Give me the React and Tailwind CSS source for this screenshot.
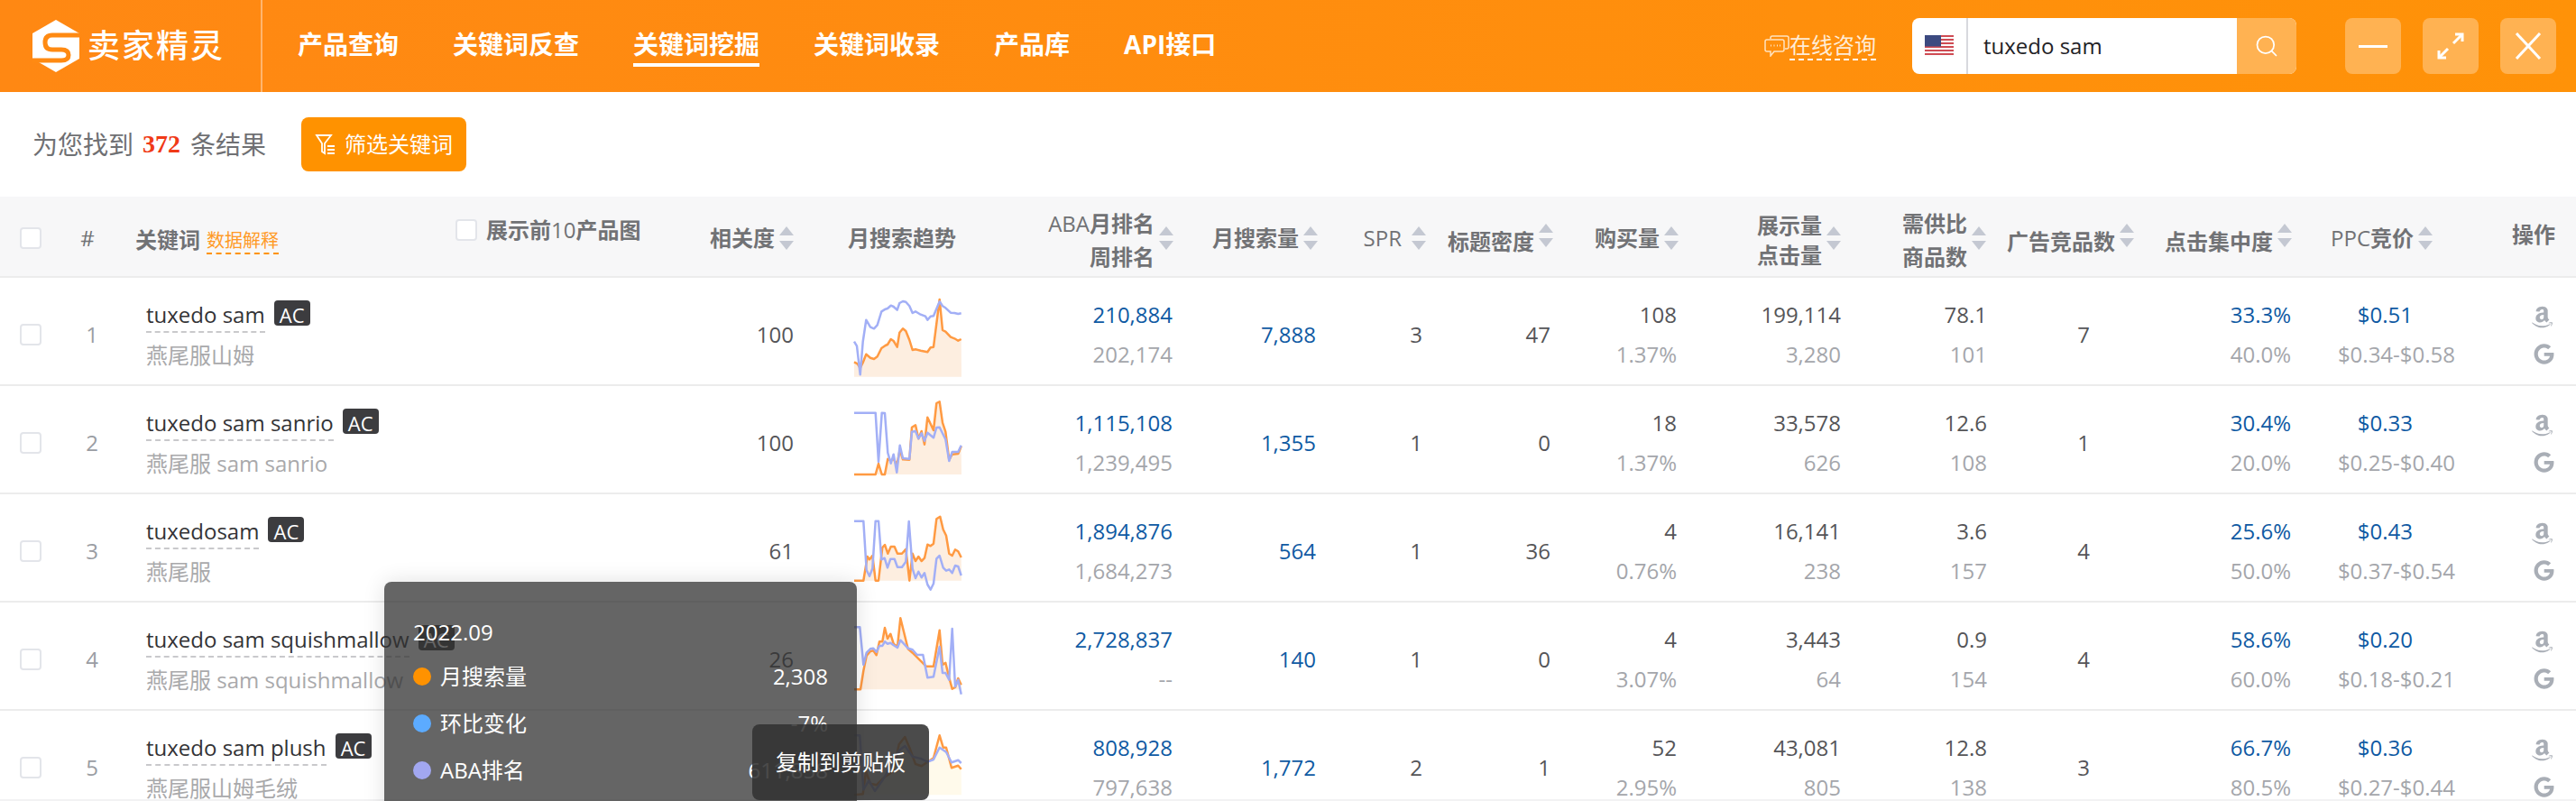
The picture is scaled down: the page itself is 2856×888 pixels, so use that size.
import { Search } from "lucide-react";
import { FaAmazon, FaGoogle } from "react-icons/fa";

const gridCols =
  "grid grid-cols-[70px_64px_626px_120px_220px_202px_160px_120px_140px_140px_180px_162px_163px_175px_188px_126px]";

// sparkline points are [x, y] read off the chart, scaled in toPoints
const rows = [
  {
    no: 1, kw: "tuxedo sam", zh: "燕尾服山姆", rel: "100",
    aba: "210,884", week: "202,174", vol: "7,888", spr: "3", title: "47",
    buy: "108", buyPct: "1.37%", imp: "199,114", click: "3,280", ratio: "78.1", goods: "101",
    ads: "7", top: "33.3%", top2: "40.0%", ppc: "$0.51", range: "$0.34-$0.58",
    off: -8, base: 347, fill: "#fdeee0",
    orange: [141,298,152,304,161,318,170,300,181,272,195,284,207,288,218,280,232,252,245,243,252,240,263,222,272,228,284,248,292,200,303,187,313,195,325,225,335,258,345,256,362,260,385,265,395,250,405,248,425,90,435,192,445,197,462,215,475,220,487,227,497,222],
    blue: [141,230,150,245,161,340,170,230,181,158,195,182,207,187,218,175,232,130,245,122,252,120,263,110,272,114,284,125,292,102,303,96,313,98,325,112,335,135,345,130,362,140,378,146,385,158,395,146,405,145,425,97,435,112,445,118,462,134,475,135,487,138,497,136],
  },
  {
    no: 2, kw: "tuxedo sam sanrio", zh: "燕尾服 sam sanrio", rel: "100",
    aba: "1,115,108", week: "1,239,495", vol: "1,355", spr: "1", title: "0",
    buy: "18", buyPct: "1.37%", imp: "33,578", click: "626", ratio: "12.6", goods: "108",
    ads: "1", top: "30.4%", top2: "20.0%", ppc: "$0.33", range: "$0.25-$0.40",
    off: -128, base: 672, fill: "#fdeee0",
    orange: [141,672,212,672,222,636,233,672,243,672,253,620,262,625,272,620,283,640,293,590,303,622,325,623,333,515,345,508,355,553,365,528,375,572,385,482,405,525,415,435,425,430,435,500,445,530,457,623,467,605,487,603,497,578],
    blue: [141,467,212,467,222,630,233,467,243,468,253,600,263,635,272,605,283,665,293,575,303,618,325,620,333,530,345,528,355,553,365,535,375,560,385,533,405,550,415,516,425,515,445,555,457,627,467,597,487,597,497,575],
  },
  {
    no: 3, kw: "tuxedosam", zh: "燕尾服", rel: "61",
    aba: "1,894,876", week: "1,684,273", vol: "564", spr: "1", title: "36",
    buy: "4", buyPct: "0.76%", imp: "16,141", click: "238", ratio: "3.6", goods: "157",
    ads: "4", top: "25.6%", top2: "50.0%", ppc: "$0.43", range: "$0.37-$0.54",
    off: -8, base: 305, fill: "#fdeee0",
    orange: [141,305,172,305,185,225,192,235,202,222,212,305,222,305,235,195,243,186,253,215,263,192,275,192,285,215,300,215,313,200,325,305,335,215,345,240,355,225,365,240,375,230,385,185,395,190,405,182,415,100,427,92,437,135,447,155,457,215,467,222,477,202,487,208,497,228],
    blue: [141,107,172,107,182,270,192,290,202,265,212,107,222,107,232,235,242,230,252,262,262,233,275,233,285,260,300,260,313,242,323,108,335,265,345,297,355,275,365,295,375,280,385,318,395,335,405,315,415,232,425,222,437,262,447,272,457,268,467,280,477,255,487,258,497,288],
  },
  {
    no: 4, kw: "tuxedo sam squishmallow", zh: "燕尾服 sam squishmallow", rel: "26",
    aba: "2,728,837", week: "--", vol: "140", spr: "1", title: "0",
    buy: "4", buyPct: "3.07%", imp: "3,443", click: "64", ratio: "0.9", goods: "154",
    ads: "4", top: "58.6%", top2: "60.0%", ppc: "$0.20", range: "$0.18-$0.21",
    off: -68, base: 487, fill: "#fdeee0",
    orange: [141,487,162,487,172,425,182,375,195,360,205,358,215,373,225,328,235,328,243,282,252,318,262,302,272,335,285,345,295,250,320,352,335,365,350,380,365,395,380,410,405,410,425,290,435,405,445,398,457,448,467,485,477,480,487,450,497,472],
    blue: [141,280,160,280,172,405,182,365,195,352,205,350,215,362,225,342,235,342,243,328,252,335,262,332,272,340,285,348,295,323,320,350,335,355,350,372,370,372,385,448,405,445,425,345,435,432,445,432,457,455,467,285,477,478,487,455,497,503],
  },
  {
    no: 5, kw: "tuxedo sam plush", zh: "燕尾服山姆毛绒", rel: "",
    aba: "808,928", week: "797,638", vol: "1,772", spr: "2", title: "1",
    buy: "52", buyPct: "2.95%", imp: "43,081", click: "805", ratio: "12.8", goods: "138",
    ads: "3", top: "66.7%", top2: "80.5%", ppc: "$0.36", range: "$0.27-$0.44",
    off: -188, base: 838, fill: "#fffaeb",
    orange: [141,838,170,835,180,760,195,800,215,805,240,780,270,760,290,670,310,645,325,680,345,735,365,742,385,728,405,715,425,640,437,680,447,680,465,748,487,740,497,752],
    blue: [141,640,160,640,172,820,190,790,210,825,235,790,270,730,290,690,310,675,335,710,365,718,385,728,405,720,425,680,447,695,465,730,487,722,497,732],
  },
];

function toPoints(list, off) {
  const out = [];
  for (let i = 0; i < list.length; i += 2) {
    out.push(`${((list[i] - 141) / 3).toFixed(1)},${(list[i + 1] / 3 + off).toFixed(1)}`);
  }
  return out.join(" ");
}

function Sparkline({ row }) {
  const baseY = (row.base / 3 + row.off).toFixed(1);
  const line = toPoints(row.orange, row.off);
  return (
    <svg width="119" height="118" viewBox="0 0 119 118" className="-translate-y-[2px] overflow-visible">
      <polygon points={`0,${baseY} ${line} 119,${baseY}`} fill={row.fill} />
      <polyline points={line} fill="none" stroke="#ff9a42" strokeWidth="2.5" strokeLinejoin="round" />
      <polyline points={toPoints(row.blue, row.off)} fill="none" stroke="#a2aff6" strokeWidth="2.5" strokeLinejoin="round" />
    </svg>
  );
}

function Logo() {
  return (
    <svg width="52" height="58" viewBox="0 0 52 58">
      <polygon points="26,0 52,15 52,43 26,58 0,43 0,15" fill="#ffffff" />
      <path
        d="M52 17 H22 Q14 17 14 25 Q14 33 22 33 H32 Q40 33 40 39 Q40 45 32 45 H0"
        fill="none"
        stroke="#ff8a12"
        strokeWidth="5"
      />
    </svg>
  );
}

function FlagUS() {
  const stripes = [0, 4, 8, 12, 16, 20];
  return (
    <svg width="32" height="24" viewBox="0 0 32 24">
      <rect width="32" height="24" fill="#fbfbfb" />
      {stripes.map((y) => (
        <rect key={y} x="0" y={y} width="32" height="2" fill="#cf4b53" />
      ))}
      <rect width="18" height="12.5" fill="#3c4a80" />
    </svg>
  );
}

function ChatIcon() {
  return (
    <svg width="28" height="24" viewBox="0 0 28 24" fill="none" stroke="#ffe3c0" strokeWidth="1.5">
      <path d="M7 4 V3 Q7 1 9 1 H25 Q27 1 27 3 V13 Q27 15 25 15 H23" />
      <path d="M3 5 H20 Q22 5 22 7 V16 Q22 18 20 18 H11 L7 23 V18 H3 Q1 18 1 16 V7 Q1 5 3 5 Z" />
      <path d="M7 11.5 H8 M10.5 11.5 H11.5 M14 11.5 H15 M17 11.5 H18" strokeWidth="2" />
    </svg>
  );
}

function ExpandIcon() {
  return (
    <svg width="30" height="30" viewBox="0 0 30 30" fill="none" stroke="#ffffff" strokeWidth="3">
      <path d="M18 12 L27 3" />
      <path d="M20 2 H28 V10" />
      <path d="M12 18 L3 27" />
      <path d="M2 20 V28 H10" />
    </svg>
  );
}

function FilterIcon() {
  return (
    <svg width="24" height="24" viewBox="0 0 24 24" fill="none" stroke="#ffffff" strokeWidth="1.8">
      <path d="M2 2 H18 L11 11 V22 L8 20 V11 Z" />
      <path d="M14 14 H22 M14 18 H22 M14 22 H22" />
    </svg>
  );
}

function SortArrows() {
  return (
    <svg width="16" height="26" viewBox="0 0 16 26" className="shrink-0">
      <path d="M8 0 L16 10 H0 Z" fill="#c4c8d2" />
      <path d="M8 26 L16 16 H0 Z" fill="#c4c8d2" />
    </svg>
  );
}

function Latin({ children }) {
  return <span className="font-normal">{children}</span>;
}

function HeadCell({ lines, pr = "pr-0", lift = false, leading = "leading-[37px]", gap = "gap-[5px]" }) {
  return (
    <div className={`flex items-center justify-end ${gap} ${pr}`}>
      <div
        className={`text-right text-[24px] font-bold text-[#717275] ${leading} ${lift ? "translate-y-[4px]" : ""} ${lines.length > 1 ? "translate-y-[2px]" : ""}`}
      >
        {lines.map((l, i) => (
          <div key={i} className="whitespace-nowrap">{l}</div>
        ))}
      </div>
      <div className={lift ? "-translate-y-[3px]" : ""}>
        <SortArrows />
      </div>
    </div>
  );
}

function Two({ top, bottom, pr, link }) {
  return (
    <div className={`flex flex-col items-end text-[24px] leading-[44px] ${pr}`}>
      <span className={link ? "text-[#0f5aa3]" : "text-[#555558]"}>{top}</span>
      <span className="text-[#a4a6ab]">{bottom}</span>
    </div>
  );
}

function One({ value, pr, link }) {
  return (
    <div className={`text-right text-[24px] ${link ? "text-[#0f5aa3]" : "text-[#555558]"} ${pr}`}>
      {value}
    </div>
  );
}

function Row({ row }) {
  return (
    <div className={`${gridCols} h-[120px] items-center border-b-2 border-[#ececec] pt-[4px]`}>
      <div className="pl-[22px]">
        <div className="h-[24px] w-[24px] rounded-[4px] border-2 border-[#e3e5ea] bg-white" />
      </div>
      <div className="text-center text-[24px] text-[#9a9da3]">{row.no}</div>
      <div className="flex flex-col pl-[28px]">
        <div className="flex items-start gap-[10px]">
          <span className="border-b-2 border-dashed border-[#c9c9cc] text-[24px] leading-[36px] text-[#333336]">
            {row.kw}
          </span>
          <span className="mt-[2px] grid h-[28px] w-[40px] place-items-center rounded-[4px] bg-[#3c3c3f] text-[22px] text-white">
            AC
          </span>
        </div>
        <div className="mt-[8px] text-[24px] leading-[34px] text-[#a9a9ab]">{row.zh}</div>
      </div>
      <One value={row.rel} />
      <div className="pl-[67px]">
        <Sparkline row={row} />
      </div>
      <Two top={row.aba} bottom={row.week} pr="pr-[2px]" link />
      <One value={row.vol} pr="pr-[3px]" link />
      <One value={row.spr} pr="pr-[5px]" />
      <One value={row.title} pr="pr-[3px]" />
      <Two top={row.buy} bottom={row.buyPct} pr="pr-[3px]" />
      <Two top={row.imp} bottom={row.click} pr="pr-[1px]" />
      <Two top={row.ratio} bottom={row.goods} pr="pr-[1px]" />
      <One value={row.ads} pr="pr-[50px]" />
      <Two top={row.top} bottom={row.top2} pr="pr-[2px]" link />
      <div className="flex flex-col items-end text-[24px] leading-[44px]">
        <span className="pr-[55px] text-[#0f5aa3]">{row.ppc}</span>
        <span className="pr-[8px] text-[#a4a6ab]">{row.range}</span>
      </div>
      <div className="flex flex-col items-end gap-[16px] pr-[24px] text-[#a9aeb6]">
        <FaAmazon size={27} />
        <FaGoogle size={23} />
      </div>
    </div>
  );
}

function TooltipRow({ color, label, value }) {
  return (
    <div className="flex h-[52px] items-center justify-between">
      <div className="flex items-center gap-[10px]">
        <span className={`h-[20px] w-[20px] rounded-full ${color}`} />
        <span>{label}</span>
      </div>
      <span>{value}</span>
    </div>
  );
}

export default function App() {
  const navItems = ["产品查询", "关键词反查", "关键词挖掘", "关键词收录", "产品库", "API接口"];

  return (
    <div className="relative flex h-[888px] w-[2856px] flex-col overflow-hidden bg-white font-['Open_Sans','Noto_Sans_CJK_SC',sans-serif]">
      <header className="flex h-[102px] shrink-0 items-center bg-gradient-to-r from-[#ff8813] to-[#ff9208] pl-[36px] pr-[22px]">
        <Logo />
        <span className="ml-[9px] w-[152px] whitespace-nowrap text-[36px] font-medium leading-[40px] tracking-[2px] text-white">
          卖家精灵
        </span>
        <div className="ml-[40px] h-full w-[2px] bg-[#ffb56e]" />
        <nav className="ml-[39px] flex gap-[60px] text-[28px] font-bold leading-[32px] text-white">
          {navItems.map((item) => (
            <span
              key={item}
              className={`mt-[5px] border-b-4 pb-[5px] ${item === "关键词挖掘" ? "border-white" : "border-transparent"}`}
            >
              {item}
            </span>
          ))}
        </nav>

        <div className="ml-auto flex items-center">
          <ChatIcon />
          <span className="border-b-2 border-dashed border-white text-[24px] leading-[30px] text-[#ffecd6]">
            在线咨询
          </span>
        </div>
        <div className="ml-[40px] flex h-[62px] w-[426px] overflow-hidden rounded-[8px] bg-white">
          <div className="flex w-[62px] shrink-0 items-center border-r-2 border-[#d8d9de] pl-[14px]">
            <FlagUS />
          </div>
          <div className="flex flex-1 items-center pl-[17px] text-[24px] text-[#222226]">tuxedo sam</div>
          <div className="grid w-[66px] shrink-0 place-items-center bg-[#ffb252] text-white">
            <Search size={28} strokeWidth={1.5} />
          </div>
        </div>
        <div className="ml-[54px] flex gap-[24px]">
          <button className="grid h-[62px] w-[62px] place-items-center rounded-[8px] bg-[#ffb252]">
            <span className="h-[3px] w-[32px] bg-white" />
          </button>
          <button className="grid h-[62px] w-[62px] place-items-center rounded-[8px] bg-[#ffb252]">
            <ExpandIcon />
          </button>
          <button className="grid h-[62px] w-[62px] place-items-center rounded-[8px] bg-[#ffb252]">
            <svg width="30" height="30" viewBox="0 0 30 30" stroke="#ffffff" strokeWidth="3">
              <path d="M2 1 L28 29 M28 1 L2 29" />
            </svg>
          </button>
        </div>
      </header>

      <div className="flex h-[116px] shrink-0 items-center pl-[36px] text-[28px] text-[#6f7073]">
        <span>为您找到</span>
        <span className="ml-[10px] font-['Liberation_Serif',serif] font-bold text-[#f03a17]">372</span>
        <span className="ml-[11px]">条结果</span>
        <button className="ml-[39px] flex h-[60px] w-[183px] items-center rounded-[8px] bg-[#ff9200] pl-[15px] text-[24px] text-white">
          <FilterIcon />
          <span className="ml-[9px]">筛选关键词</span>
        </button>
      </div>

      <div className={`${gridCols} h-[90px] shrink-0 items-center border-b-2 border-[#ececec] bg-[#f7f7f8] pt-[3px]`}>
        <div className="pl-[22px]">
          <div className="h-[24px] w-[24px] rounded-[4px] border-2 border-[#e3e5ea] bg-white" />
        </div>
        <div className="pr-[10px] text-center text-[24px] text-[#717275]">#</div>
        <div className="flex translate-y-[2px] items-center pl-[16px] text-[24px] font-bold text-[#717275]">
          <span>关键词</span>
          <span className="ml-[7px] translate-y-[2px] border-b-2 border-dashed border-[#ff9200] text-[20px] font-normal leading-[26px] text-[#ff9a26]">
            数据解释
          </span>
          <div className="ml-[196px] flex -translate-y-[11px] items-center">
            <div className="h-[24px] w-[24px] rounded-[4px] border-2 border-[#e3e5ea] bg-white" />
            <span className="ml-[10px]">
              展示前<Latin>10</Latin>产品图
            </span>
          </div>
        </div>
        <HeadCell lines={["相关度"]} />
        <div className="pl-[60px] text-[24px] font-bold text-[#717275]">月搜索趋势</div>
        <HeadCell lines={[<><Latin>ABA</Latin>月排名</>, "周排名"]} pr="pr-[1px]" />
        <HeadCell lines={["月搜索量"]} pr="pr-[1px]" />
        <HeadCell lines={[<Latin>SPR</Latin>]} pr="pr-[1px]" gap="gap-[11px]" />
        <HeadCell lines={["标题密度"]} lift />
        <HeadCell lines={["购买量"]} pr="pr-[1px]" />
        <HeadCell lines={["展示量", "点击量"]} pr="pr-[1px]" leading="leading-[33px]" />
        <HeadCell lines={["需供比", "商品数"]} pr="pr-[2px]" />
        <HeadCell lines={["广告竞品数"]} pr="pr-[1px]" lift />
        <HeadCell lines={["点击集中度"]} pr="pr-[1px]" lift />
        <HeadCell lines={[<><Latin>PPC</Latin>竞价</>]} pr="pr-[33px]" />
        <div className="-translate-y-[4px] pr-[23px] text-right text-[24px] font-bold text-[#717275]">操作</div>
      </div>

      <div className="min-h-0 flex-1 overflow-hidden">
        {rows.map((row) => (
          <Row key={row.no} row={row} />
        ))}
      </div>
      <div className="h-[2px] shrink-0 bg-[#f2f2f3]" />

      <div className="absolute left-[426px] top-[645px] h-[300px] w-[524px] rounded-[8px] bg-[rgba(50,50,50,0.75)] px-[32px] pt-[40px] text-[24px] text-white shadow-[0_0_24px_rgba(0,0,0,0.12)]">
        <div className="mb-[7px] leading-[32px]">2022.09</div>
        <TooltipRow color="bg-[#ff9200]" label="月搜索量" value="2,308" />
        <TooltipRow color="bg-[#5cabff]" label="环比变化" value="-7%" />
        <TooltipRow color="bg-[#a2a7f0]" label="ABA排名" value="611,858" />
      </div>
      <div className="absolute left-[834px] top-[803px] grid h-[84px] w-[196px] place-items-center rounded-[8px] bg-[rgba(50,50,50,0.88)] text-[24px] text-white">
        复制到剪贴板
      </div>
    </div>
  );
}
